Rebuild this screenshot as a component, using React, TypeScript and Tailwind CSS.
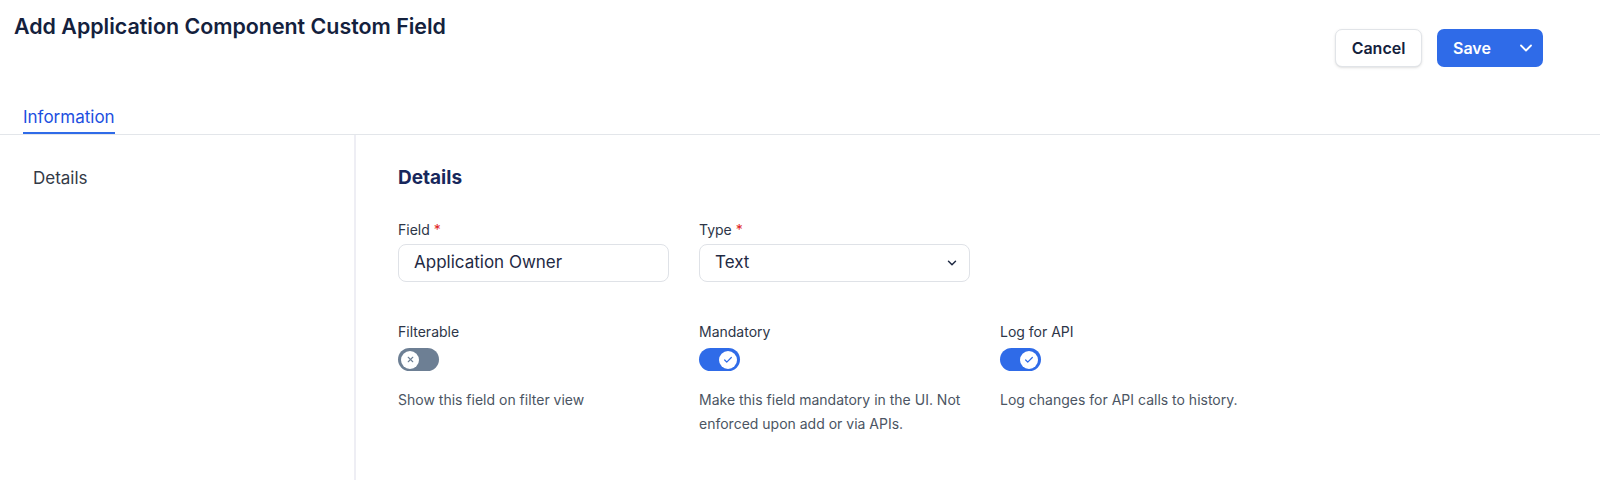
import { ChevronDown, Check, X } from "lucide-react";

interface ToggleProps {
  on: boolean;
}

function Toggle({ on }: ToggleProps) {
  return (
    <div
      className={
        on
          ? "flex h-[23px] w-[41px] items-center justify-end rounded-full bg-[#2f6be8] px-[3px]"
          : "flex h-[23px] w-[41px] items-center justify-start rounded-full bg-[#6d7f94] px-[3px]"
      }
    >
      <span className="flex h-[18px] w-[18px] items-center justify-center rounded-full bg-white">
        {on ? (
          <Check className="h-[10px] w-[10px] text-[#2f6be8]" strokeWidth={3} />
        ) : (
          <X className="h-[9px] w-[9px] text-[#6d7f94]" strokeWidth={3} />
        )}
      </span>
    </div>
  );
}

const options = [
  { label: "Filterable", on: false, help: "Show this field on filter view" },
  { label: "Mandatory", on: true, help: "Make this field mandatory in the UI. Not enforced upon add or via APIs." },
  { label: "Log for API", on: true, help: "Log changes for API calls to history." },
];

export default function App() {
  return (
    <div className="min-h-[480px] bg-white font-['Inter','Liberation_Sans',sans-serif] text-[#1f2a44]">
      <div className="border-b border-[#e3e6ea]">
        <div className="flex items-start justify-between pl-[14px] pr-[57px] pt-[12px]">
          <h1 className="text-[21.4px] font-semibold leading-[28px] text-[#14213d]">
            Add Application Component Custom Field
          </h1>
          <div className="mt-[17px] flex gap-[15px]">
            <button className="h-[38px] w-[87px] rounded-[7px] border border-[#e1e4e8] bg-white text-[16px] font-semibold text-[#14213d] shadow-sm">
              Cancel
            </button>
            <button className="flex h-[38px] w-[106px] items-center justify-between rounded-[7px] bg-[#2f6be8] pl-[16px] pr-[7px] text-[16px] font-semibold text-white">
              <span>Save</span>
              <ChevronDown className="h-[20px] w-[20px]" strokeWidth={2.2} />
            </button>
          </div>
        </div>
        <div className="mt-[38px] pl-[23px]">
          <div className="inline-block border-b-2 border-[#2f6be8] pb-[3px] text-[17px] leading-[24px] text-[#1d4fe0]">
            Information
          </div>
        </div>
      </div>

      <div className="flex min-h-[345px]">
        <aside className="w-[356px] shrink-0 border-r-2 border-[#eeeef4] pl-[33px] pt-[31px]">
          <div className="text-[17px] leading-[24px] text-[#333a47]">Details</div>
        </aside>

        <main className="flex-1 pl-[42px] pt-[29px]">
          <h2 className="text-[19px] font-bold leading-[28px] text-[#17275c]">Details</h2>

          <div className="mt-[25px] grid grid-cols-[271px_271px] gap-x-[30px]">
            <div>
              <label className="text-[14px] leading-[20px] text-[#2d3648]">
                Field <span className="text-[#e02424]">*</span>
              </label>
              <div className="mt-[3px] flex h-[38px] items-center rounded-[8px] border border-[#dfe2e7] px-[15px] text-[17px] text-[#1f2a44]">
                Application Owner
              </div>
            </div>
            <div>
              <label className="text-[14px] leading-[20px] text-[#2d3648]">
                Type <span className="text-[#e02424]">*</span>
              </label>
              <div className="mt-[3px] flex h-[38px] items-center justify-between rounded-[8px] border border-[#dfe2e7] pl-[15px] pr-[10px] text-[17px] text-[#1f2a44]">
                <span>Text</span>
                <ChevronDown className="h-[14px] w-[14px] text-[#1f2a44]" strokeWidth={2.5} />
              </div>
            </div>
          </div>

          <div className="mt-[40px] grid grid-cols-[271px_271px_271px] gap-x-[30px]">
            {options.map((o) => (
              <div key={o.label}>
                <div className="text-[14px] leading-[20px] text-[#2d3648]">{o.label}</div>
                <div className="mt-[6px]">
                  <Toggle on={o.on} />
                </div>
                <p className="mt-[17px] text-[14px] leading-[24px] text-[#4b5563]">{o.help}</p>
              </div>
            ))}
          </div>
        </main>
      </div>
    </div>
  );
}
